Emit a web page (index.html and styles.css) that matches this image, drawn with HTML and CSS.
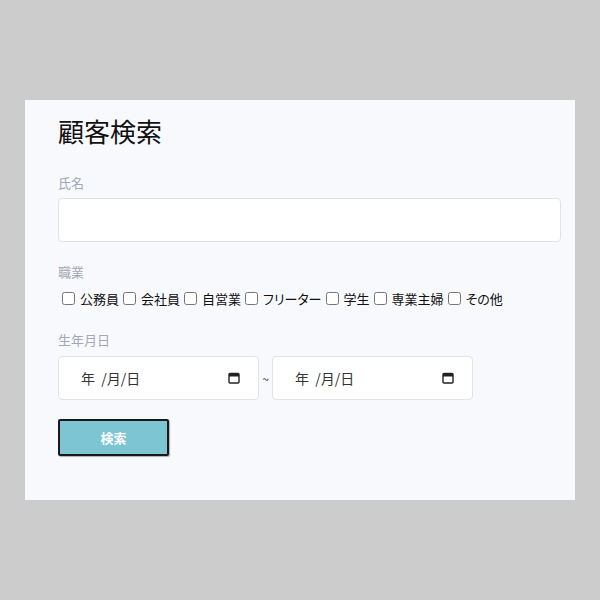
FILE: index.html
```html
<!DOCTYPE html>
<html lang="ja">
<head>
<meta charset="utf-8">
<link rel="stylesheet" href="styles.css">
</head>
<body>
<div class="card">
  <h1 class="title">顧客検索</h1>
  <div class="group">
    <div class="label">氏名</div>
    <div class="text-input"></div>
  </div>
  <div class="group group-job">
    <div class="label">職業</div>
    <div class="checks">
      <label class="check"><input type="checkbox"><span>公務員</span></label>
      <label class="check"><input type="checkbox"><span>会社員</span></label>
      <label class="check"><input type="checkbox"><span>自営業</span></label>
      <label class="check"><input type="checkbox"><span>フリーター</span></label>
      <label class="check"><input type="checkbox"><span>学生</span></label>
      <label class="check"><input type="checkbox"><span>専業主婦</span></label>
      <label class="check"><input type="checkbox"><span>その他</span></label>
    </div>
  </div>
  <div class="group group-date">
    <div class="label">生年月日</div>
    <div class="date-row">
      <div class="date-input">
        <span class="date-text">年 &nbsp;/月/日</span>
        <svg class="cal" width="12" height="12" viewBox="0 0 12 12"><rect x="1" y="1.5" width="10" height="9.5" rx="1" fill="none" stroke="#222" stroke-width="1.4"/><rect x="1" y="1.5" width="10" height="3" fill="#222"/></svg>
      </div>
      <span class="tilde">~</span>
      <div class="date-input">
        <span class="date-text">年 &nbsp;/月/日</span>
        <svg class="cal" width="12" height="12" viewBox="0 0 12 12"><rect x="1" y="1.5" width="10" height="9.5" rx="1" fill="none" stroke="#222" stroke-width="1.4"/><rect x="1" y="1.5" width="10" height="3" fill="#222"/></svg>
      </div>
    </div>
  </div>
  <button class="btn">検索</button>
</div>
</body>
</html>
```
FILE: styles.css
```css
html, body {
  margin: 0;
  padding: 0;
  background: #cccccc;
}
body {
  font-family: "Noto Sans CJK JP", "Noto Sans", sans-serif;
  width: 600px;
  height: 600px;
  padding-top: 100px;
  padding-left: 25px;
  box-sizing: border-box;
}
.card {
  width: 550px;
  height: 400px;
  box-sizing: border-box;
  background: #f8f9fd;
  padding: 15px 14px 0 33px;
}
.title {
  margin: 0;
  font-size: 26px;
  font-weight: 400;
  line-height: 32px;
  color: #111;
}
.group {
  margin-top: 26px;
}
.label {
  font-size: 13px;
  line-height: 20px;
  color: #a3a7b9;
  margin-bottom: 5px;
}
.text-input {
  height: 44px;
  box-sizing: border-box;
  background: #fff;
  border: 1px solid #e1e3e8;
  border-radius: 4px;
}
.group-job {
  margin-top: 20px;
}
.group-job .label {
  margin-bottom: 6px;
}
.checks {
  display: flex;
  align-items: center;
  height: 20px;
  font-size: 13px;
  color: #111;
  font-feature-settings: "palt";
}
.check {
  display: flex;
  align-items: center;
}
.check input {
  margin: 0 5px 0 4px;
  width: 13px;
  height: 13px;
}
.group-date {
  margin-top: 22px;
}
.group-date .label {
  margin-bottom: 6px;
}
.date-row {
  display: flex;
  align-items: center;
}
.date-input {
  width: 201px;
  height: 44px;
  box-sizing: border-box;
  background: #fff;
  border: 1px solid #e1e3e8;
  border-radius: 4px;
  display: flex;
  align-items: center;
  justify-content: space-between;
  padding: 0 18px 0 22px;
  font-size: 14px;
  color: #333;
}
.cal {
  display: block;
}
.tilde {
  width: 13px;
  text-align: center;
  font-size: 12px;
  color: #333;
}
.btn {
  display: block;
  margin-top: 19px;
  width: 111px;
  height: 37px;
  background: #7dc5d3;
  border: 2px solid #1a1a1a;
  border-radius: 2px;
  color: #fff;
  font-family: inherit;
  font-weight: 700;
  font-size: 13px;
  box-shadow: 1px 1px 1px rgba(0,0,0,0.3);
}
```
